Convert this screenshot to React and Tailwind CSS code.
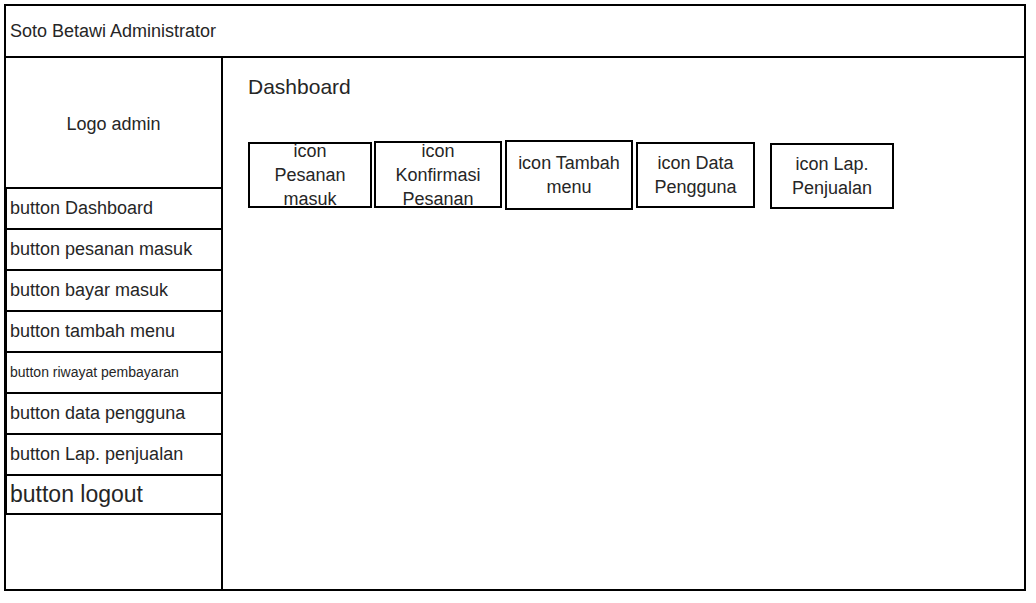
const menu = [
  { label: 'button Dashboard', size: 'text-[18px]' },
  { label: 'button pesanan masuk', size: 'text-[18px]' },
  { label: 'button bayar masuk', size: 'text-[18px]' },
  { label: 'button tambah menu', size: 'text-[18px]' },
  { label: 'button riwayat pembayaran', size: 'text-[14px]' },
  { label: 'button data pengguna', size: 'text-[18px]' },
  { label: 'button Lap. penjualan', size: 'text-[18px]' },
];

const tiles = [
  { lines: ['icon', 'Pesanan', 'masuk'], cls: 'w-[124px] h-[66px] mt-[2px]' },
  { lines: ['icon', 'Konfirmasi', 'Pesanan'], cls: 'w-[128px] h-[67px] mt-[1px] ml-[2px]' },
  { lines: ['icon Tambah', 'menu'], cls: 'w-[128px] h-[70px] ml-[3px]' },
  { lines: ['icon Data', 'Pengguna'], cls: 'w-[119px] h-[66px] mt-[2px] ml-[3px]' },
  { lines: ['icon Lap.', 'Penjualan'], cls: 'w-[124px] h-[66px] mt-[3px] ml-[15px]' },
];

export default function App() {
  return (
    <div className="w-[1036px] h-[603px] bg-white font-['Liberation_Sans',Arial,sans-serif] text-[#262626]">
      <div className="absolute left-[4px] top-[4px] w-[1022px] h-[587px] border-2 border-black flex flex-col">
        <header className="h-[52px] shrink-0 border-b-2 border-black flex items-center pl-[4px] text-[18px]">
          Soto Betawi Administrator
        </header>

        <div className="flex flex-1 min-h-0">
          <aside className="w-[217px] shrink-0 border-r-2 border-black flex flex-col">
            <div className="h-[129px] flex items-center justify-center pt-[4px] text-[18px]">Logo admin</div>
            {menu.map((m) => (
              <button
                key={m.label}
                className={`h-[41px] border-t-2 border-l border-black text-left pl-[3px] ${m.size}`}
              >
                {m.label}
              </button>
            ))}
            <button className="h-[41px] border-y-2 border-l border-black text-left pl-[3px] text-[23px]">
              button logout
            </button>
          </aside>

          <main className="flex-1 pl-[25px] pt-[17px]">
            <h1 className="text-[21px] leading-[24px]">Dashboard</h1>
            <div className="flex items-start mt-[41px]">
              {tiles.map((t) => (
                <div
                  key={t.lines.join(' ')}
                  className={`border-2 border-black flex flex-col items-center justify-center text-center text-[18px] leading-[24px] ${t.cls}`}
                >
                  {t.lines.map((l) => (
                    <span key={l} className="whitespace-nowrap">{l}</span>
                  ))}
                </div>
              ))}
            </div>
          </main>
        </div>
      </div>
    </div>
  );
}
